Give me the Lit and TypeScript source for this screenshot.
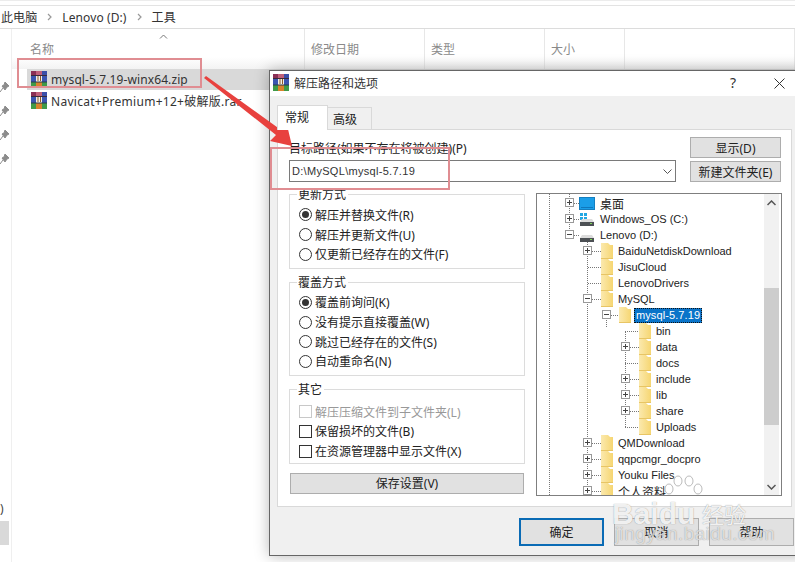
import { LitElement, html, css, svg } from "lit";
import { customElement } from "lit/decorators.js";

const rar = html`<svg class="rar" width="16" height="17" viewBox="0 0 16 17">
  <rect x="0" y="0" width="16" height="5" fill="#8a2f55"/>
  <rect x="11" y="0" width="5" height="5" fill="#3b4fa8"/>
  <rect x="0" y="5" width="16" height="6" fill="#3b55b0"/>
  <rect x="0" y="11" width="16" height="6" fill="#3f9a48"/>
  <rect x="5" y="0" width="6" height="5" fill="#c0607a"/>
  <rect x="5" y="11" width="6" height="6" fill="#d9822b"/>
  <rect x="5" y="5" width="6" height="6" fill="#f2efe6"/>
  <rect x="6.5" y="5" width="1" height="5" fill="#8a5a2b"/>
  <rect x="9" y="5" width="1" height="5" fill="#8a5a2b"/>
  <rect x="0" y="4" width="16" height="1" fill="#3a2a3a"/>
  <rect x="0" y="10.5" width="16" height="1" fill="#2a3a4a"/>
</svg>`;

const pin = html`<svg class="pin" width="10" height="12" viewBox="0 0 10 12">
  <path d="M5 1 L9 5 L7 6 L5 9 L2 5 L4 4 Z M3 7 L0 11" fill="#8c8c8c" stroke="#8c8c8c" stroke-width="1"/>
</svg>`;

const folder = html`<svg class="folder" width="12" height="16" viewBox="0 0 12 16" preserveAspectRatio="none">
  <defs><linearGradient id="fg" x1="0" x2="1" y1="0" y2="0">
    <stop offset="0" stop-color="#fbe9ae"/><stop offset="1" stop-color="#f6d672"/></linearGradient></defs>
  <path d="M0 0 H7 L9 2 H12 V16 H0 Z" fill="url(#fg)"/>
  <path d="M0 15.5 H12" stroke="#e8c565" stroke-width="1"/>
</svg>`;

const desktop = html`<svg class="ico16" width="16" height="13" viewBox="0 0 16 13">
  <rect x="0.5" y="0.5" width="15" height="12" fill="#1b9ee8" stroke="#157fc0"/>
  <rect x="2" y="10" width="12" height="1" fill="#0e78bd"/>
</svg>`;

const drive = (win: boolean) => html`<svg class="ico16" width="16" height="13" viewBox="0 0 16 13">
  ${win ? svg`<rect x="1" y="0" width="3" height="3" fill="#21a7e3"/><rect x="5" y="0" width="3" height="3" fill="#21a7e3"/><rect x="1" y="4" width="3" height="3" fill="#21a7e3"/><rect x="5" y="4" width="3" height="3" fill="#21a7e3"/>` : ""}
  <path d="M3 6 H13 L15 9 H1 Z" fill="#dcdcdc"/>
  <rect x="1" y="9" width="14" height="4" fill="#4c5054"/>
  <rect x="11" y="10" width="2" height="1" fill="#7fd65a"/>
</svg>`;

const chev = html`<svg class="sep" width="5" height="8" viewBox="0 0 5 8"><path d="M1 1 L4 4 L1 7" fill="none" stroke="#999" stroke-width="1.2"/></svg>`;

interface Node { t: string; d: number; e?: "+" | "-"; ic?: "desk" | "win" | "drv"; sel?: boolean; cjk?: boolean }
const tree: Node[] = [
  { t: "桌面", d: 0, e: "+", ic: "desk", cjk: true },
  { t: "Windows_OS (C:)", d: 0, e: "+", ic: "win" },
  { t: "Lenovo (D:)", d: 0, e: "-", ic: "drv" },
  { t: "BaiduNetdiskDownload", d: 1, e: "+" },
  { t: "JisuCloud", d: 1 },
  { t: "LenovoDrivers", d: 1 },
  { t: "MySQL", d: 1, e: "-" },
  { t: "mysql-5.7.19", d: 2, e: "-", sel: true },
  { t: "bin", d: 3 },
  { t: "data", d: 3, e: "+" },
  { t: "docs", d: 3 },
  { t: "include", d: 3, e: "+" },
  { t: "lib", d: 3, e: "+" },
  { t: "share", d: 3, e: "+" },
  { t: "Uploads", d: 3 },
  { t: "QMDownload", d: 1, e: "+" },
  { t: "qqpcmgr_docpro", d: 1, e: "+" },
  { t: "Youku Files", d: 1, e: "+" },
  { t: "个人资料", d: 1, e: "+", cjk: true },
];

const groups = [
  { title: "更新方式", kind: "radio", cls: "", items: [["解压并替换文件(R)", 1], ["解压并更新文件(U)", 0], ["仅更新已经存在的文件(F)", 0]] },
  { title: "覆盖方式", kind: "radio", cls: "", items: [["覆盖前询问(K)", 1], ["没有提示直接覆盖(W)", 0], ["跳过已经存在的文件(S)", 0], ["自动重命名(N)", 0]] },
  { title: "其它", kind: "check", cls: "low", items: [["解压压缩文件到子文件夹(L)", 2], ["保留损坏的文件(B)", 0], ["在资源管理器中显示文件(X)", 0]] },
];

@customElement("app-root")
export class AppRoot extends LitElement {
  static styles = css`
    :host { display: block; position: relative; width: 795px; height: 562px; overflow: hidden; background: #fff;
      font-family: "Noto Sans", "Noto Sans CJK SC", sans-serif; font-size: 12px; color: #222; }
    .topgap { height: 6px; border-top: 1px solid #ececec; border-bottom: 1px solid #e3e3e3; box-sizing: border-box; }
    .crumbs { height: 22px; border-bottom: 1px solid #dcdcdc; display: flex; align-items: center; gap: 10px; padding-left: 1px; font-size: 12px; letter-spacing: .1px; color: #333; }
    .main { display: flex; height: 533px; }
    .side { width: 12px; box-sizing: border-box; border-right: 1px solid #efefef; display: flex; flex-direction: column; align-items: flex-start; }
    .pins { display: flex; flex-direction: column; gap: 12px; margin-top: 52px; }
    .pin { display: block; }
    .side .paren { margin-top: 337px; font-size: 12px; line-height: 14px; color: #444; }
    .side .blk { width: 9px; height: 24px; margin-top: 5px; background: #d9d9d9; }
    .list { flex: 1; display: flex; flex-direction: column; min-width: 0; }
    .head { height: 40px; display: grid; grid-template-columns: 293px 120px 120px 80px 1fr; background: linear-gradient(#fff 70%, #f3f3f3); position: relative; }
    .head span { padding: 11px 0 0 6px; border-right: 1px solid #e7e7e7; color: #8a8a8a; font-size: 12px; }
    .head span:first-child { padding-left: 18px; }
    .head span:last-child { border-right: none; }
    .caret { position: absolute; left: 147px; top: 5px; }
    .row { height: 21px; display: flex; align-items: center; gap: 4px; margin-left: 15px; padding-left: 4px; font-size: 12px; letter-spacing: .1px; color: #333; white-space: nowrap; }
    .row.on { background: #d9d9d9; }
    .row.wide { letter-spacing: .28px; }

    .dialog { position: absolute; left: 269px; top: 70px; width: 540px; height: 486px; box-sizing: border-box; background: #f0f0f0;
      border: 1px solid #666; box-shadow: 0 0 14px rgba(0,0,0,.28); display: flex; flex-direction: column; }
    .title { height: 25px; background: #fff; display: flex; align-items: center; gap: 5px; padding: 0 0 2px 3px; box-sizing: border-box; font-size: 12px; color: #333; flex: none; }
    .title .t { flex: 1; }
    .title .q { position: absolute; left: 460px; top: 2px; font-size: 14px; color: #333; }
    .title .x { position: absolute; left: 504px; top: 7px; }
    .tabs { display: flex; padding: 8px 0 0 7px; height: 33px; box-sizing: border-box; flex: none; align-items: flex-end; }
    .tab { width: 44px; height: 22px; box-sizing: border-box; border: 1px solid #d9d9d9; border-bottom: none; border-left: none; display: flex; align-items: center; padding-left: 5px; font-size: 12px; background: #f0f0f0; }
    .tab.on { width: 51px; border-left: 1px solid #d9d9d9; background: #fff; height: 25px; margin-bottom: -1px; position: relative; z-index: 1; padding: 0 0 2px 7px; }
    .panel { margin: 0 0 0 7px; width: 515px; height: 378px; flex: none; box-sizing: border-box; background: #fff; border: 1px solid #d9d9d9; display: grid; grid-template-columns: 236px 246px; column-gap: 11px; align-content: start; padding: 6px 0 0 11px; }
    .top { grid-column: 1 / 3; display: flex; gap: 14px; height: 48px; }
    .top .l { width: 387px; }
    .top .l .lbl { height: 24px; line-height: 26px; white-space: nowrap; font-size: 12px; }
    .combo { height: 22px; box-sizing: border-box; border: 1px solid #7a7a7a; display: flex; align-items: center; padding: 0 3px 0 2px; font-family: "Liberation Sans", sans-serif; font-size: 11px; letter-spacing: .3px; justify-content: space-between; color: #333; }
    .top .r { width: 91px; display: flex; flex-direction: column; gap: 3px; margin-top: 1px; }
    .btn { background: #e1e1e1; border: 1px solid #adadad; box-sizing: border-box; display: flex; align-items: center; justify-content: center; font-size: 12px; color: #222; height: 21px; white-space: nowrap; }
    .col { display: flex; flex-direction: column; margin-top: 10px; }
    .grp { border: 1px solid #dcdcdc; box-sizing: border-box; margin-bottom: 13px; padding: 10px 0 3.5px 9px; position: relative; }
    .grp.low { padding: 12px 0 2px 9px; }
    .grp .gt { position: absolute; left: 7px; top: -7px; background: #fff; padding: 0 2px 0 1px; line-height: 14px; font-size: 12px; }
    .opt { height: 19.7px; display: flex; align-items: center; gap: 3px; font-size: 12px; white-space: nowrap; color: #222; }
    .opt.dis { color: #999; }
    .radio { width: 13px; height: 13px; border-radius: 50%; border: 1px solid #333; box-sizing: border-box; background: #fff; display: flex; align-items: center; justify-content: center; flex: none; }
    .radio i { width: 7px; height: 7px; background: #333; border-radius: 50%; display: block; }
    .check { width: 13px; height: 13px; border: 1px solid #333; box-sizing: border-box; flex: none; }
    .opt.dis .check { border-color: #c8c8c8; }
    .save { margin: -4px 0 0 1px; width: 234px; height: 21px; }
    .tree { margin-top: 9px; height: 303px; box-sizing: border-box; border: 1px solid #7f7f7f; position: relative; overflow: hidden; display: flex; }
    .guides { position: absolute; left: 0; top: 0; }
    .rows { flex: 1; position: relative; padding-top: 1px; min-width: 0; }
    .tr { height: 16px; display: flex; align-items: center; font-family: "Liberation Sans", sans-serif; font-size: 11px; white-space: nowrap; color: #222; position: relative; }
    .box { position: absolute; width: 9px; height: 9px; top: 3px; box-sizing: border-box; border: 1px solid #999; background: #fff; }
    .box b { position: absolute; left: 1px; right: 1px; top: 3px; height: 1px; background: #444; }
    .box u { position: absolute; top: 1px; bottom: 1px; left: 3px; width: 1px; background: #444; }
    .folder, .ico16 { flex: none; display: block; }
    .tr .lbl { margin-left: 4px; padding: 0 1px; line-height: 15px; }
    .tr .lbl.cjk { font-family: "Noto Sans CJK SC", sans-serif; font-size: 12px; }
    .tr .lbl.sel { background: #0a74c9; color: #fff; outline: 1px dotted #111; outline-offset: -1px; margin-left: 3px; padding: 0 2px; letter-spacing: .1px; }
    .sb { width: 15px; margin-right: 2px; flex: none; background: #f1f1f1; display: flex; flex-direction: column; align-items: center; }
    .sb .arr { height: 17px; display: flex; align-items: center; justify-content: center; flex: none; }
    .sb .gap1 { height: 77px; flex: none; }
    .sb .thumb { height: 137px; width: 15px; background: #cdcdcd; flex: none; }
    .sb .gap2 { flex: 1; }
    .foot { display: flex; gap: 10px; margin: 11px 0 0 249px; flex: none; }
    .foot .btn { width: 85px; height: 28px; }
    .foot .btn.def { border: 2px solid #0a6bb5; }

    .overlay { position: absolute; pointer-events: none; }
    .redbox { border: 2px solid #e08d92; box-sizing: border-box; }
    .wm { position: absolute; color: rgba(255,255,255,.9); text-shadow: 0 0 1px rgba(90,90,90,.7); font-family: "Liberation Sans", sans-serif; white-space: nowrap; pointer-events: none; }
    .wm.cn { font-family: "Noto Sans CJK SC", sans-serif; }
    .wm1 { left: 612px; top: 497px; font-size: 30px; font-weight: 700; }
    .wm1 span { margin-left: 2px; }
    .wm2 { left: 702px; top: 497px; font-size: 22px; }
    .wm3 { left: 615px; top: 523px; font-size: 19px; letter-spacing: .4px; color: rgba(255,255,255,.7); }
    .arrow { left: 0; top: 0; }
    .paw { left: 660px; top: 474px; }
  `;

  render() {
    return html`
      <div class="topgap"></div>
      <div class="crumbs">
        <span>此电脑</span>${chev}<span>Lenovo (D:)</span>${chev}<span>工具</span>
      </div>
      <div class="main">
        <div class="side">
          <div class="pins">${pin}${pin}${pin}${pin}</div>
          <div class="paren">)</div>
          <div class="blk"></div>
        </div>
        <div class="list">
          <div class="head">
            <span>名称</span><span>修改日期</span><span>类型</span><span>大小</span><span></span>
            <svg class="caret" width="9" height="5" viewBox="0 0 9 5"><path d="M1 4.5 L4.5 1 L8 4.5" fill="none" stroke="#777"/></svg>
          </div>
          <div class="row on">${rar}<span>mysql-5.7.19-winx64.zip</span></div>
          <div class="row wide">${rar}<span>Navicat+Premium+12+破解版.rar</span></div>
        </div>
      </div>

      <div class="dialog">
        <div class="title">${rar}<span class="t">解压路径和选项</span>
          <span class="q">?</span>
          <svg class="x" width="11" height="11" viewBox="0 0 11 11"><path d="M.5 .5 L10.5 10.5 M10.5 .5 L.5 10.5" stroke="#333" fill="none"/></svg>
        </div>
        <div class="tabs"><div class="tab on">常规</div><div class="tab">高级</div></div>
        <div class="panel">
          <div class="top">
            <div class="l">
              <div class="lbl">目标路径(如果不存在将被创建)(P)</div>
              <div class="combo"><span>D:\\MySQL\\mysql-5.7.19</span>
                <svg width="9" height="5" viewBox="0 0 9 5"><path d="M.5 .5 L4.5 4.5 L8.5 .5" fill="none" stroke="#555"/></svg></div>
            </div>
            <div class="r"><div class="btn">显示(D)</div><div class="btn">新建文件夹(E)</div></div>
          </div>
          <div class="col">
            ${groups.map(g => html`<div class="grp ${g.cls}"><span class="gt">${g.title}</span>
              ${g.items.map(([t, v]) => html`<div class="opt ${v === 2 ? "dis" : ""}">
                ${g.kind === "radio"
                  ? html`<span class="radio">${v === 1 ? html`<i></i>` : ""}</span>`
                  : html`<span class="check"></span>`}
                <span>${t}</span></div>`)}
            </div>`)}
            <div class="btn save">保存设置(V)</div>
          </div>
          <div class="tree">
            <svg class="guides" width="228" height="303" viewBox="0 0 228 303">
              <g stroke="#777" stroke-dasharray="1 1" fill="none">
                <path d="M12.5 0 V303"/>
                <path d="M32.5 0 V38"/>
                <path d="M50.5 42 V300 M69.5 122 V134 M88.5 138 V233"/>
                <path d="M37 9.5 H42 M37 25.5 H42 M37 41.5 H42 M55 57.5 H64 M51 73.5 H64 M51 89.5 H64 M55 105.5 H64 M74 121.5 H82 M88 137.5 H102 M93 153.5 H102 M88 169.5 H102 M93 185.5 H102 M93 201.5 H102 M93 217.5 H102 M88 233.5 H102 M55 249.5 H64 M55 265.5 H64 M55 281.5 H64 M55 297.5 H64"/>
              </g>
            </svg>
            <div class="rows">
              ${tree.map(n => {
                const boxX = [28, 46, 65, 84][n.d];
                const iconX = n.ic ? 42 : [0, 64, 82, 102][n.d];
                return html`<div class="tr" style="padding-left:${iconX}px">
                  ${n.e ? html`<span class="box" style="left:${boxX}px"><b></b>${n.e === "+" ? html`<u></u>` : ""}</span>` : ""}
                  ${n.ic === "desk" ? desktop : n.ic === "win" ? drive(true) : n.ic === "drv" ? drive(false) : folder}
                  <span class="lbl ${n.sel ? "sel" : ""} ${n.cjk ? "cjk" : ""}">${n.t}</span>
                </div>`;
              })}
            </div>
            <div class="sb">
              <div class="arr"><svg width="9" height="6" viewBox="0 0 9 6"><path d="M.5 5 L4.5 1 L8.5 5" fill="none" stroke="#555" stroke-width="1.5"/></svg></div>
              <div class="gap1"></div><div class="thumb"></div><div class="gap2"></div>
              <div class="arr"><svg width="9" height="6" viewBox="0 0 9 6"><path d="M.5 1 L4.5 5 L8.5 1" fill="none" stroke="#555" stroke-width="1.5"/></svg></div>
            </div>
          </div>
        </div>
        <div class="foot">
          <div class="btn def">确定</div><div class="btn">取消</div><div class="btn">帮助</div>
        </div>
      </div>

      <div class="overlay redbox" style="left:17px;top:58px;width:185px;height:30px"></div>
      <div class="overlay redbox" style="left:270px;top:147px;width:180px;height:43px"></div>
      <svg class="overlay arrow" width="795" height="562" viewBox="0 0 795 562">
        <path d="M204 78 L206 76 L281 130 L287 125 L292 146 L270 141 L276 135 Z" fill="#e8413e"/>
      </svg>
      <svg class="overlay paw" width="46" height="32" viewBox="0 0 46 32">
        <g fill="rgba(255,255,255,.9)" stroke="rgba(120,120,120,.5)">
          <ellipse cx="9" cy="15" rx="4" ry="5"/><ellipse cx="18" cy="7" rx="4" ry="5"/>
          <ellipse cx="29" cy="7" rx="4" ry="5"/><ellipse cx="38" cy="15" rx="4" ry="5"/>
        </g>
      </svg>
      <div class="wm wm1">Baidu</div>
      <div class="wm cn wm2">经验</div>
      <div class="wm wm3">jingyan.baidu.com</div>
    `;
  }
}
